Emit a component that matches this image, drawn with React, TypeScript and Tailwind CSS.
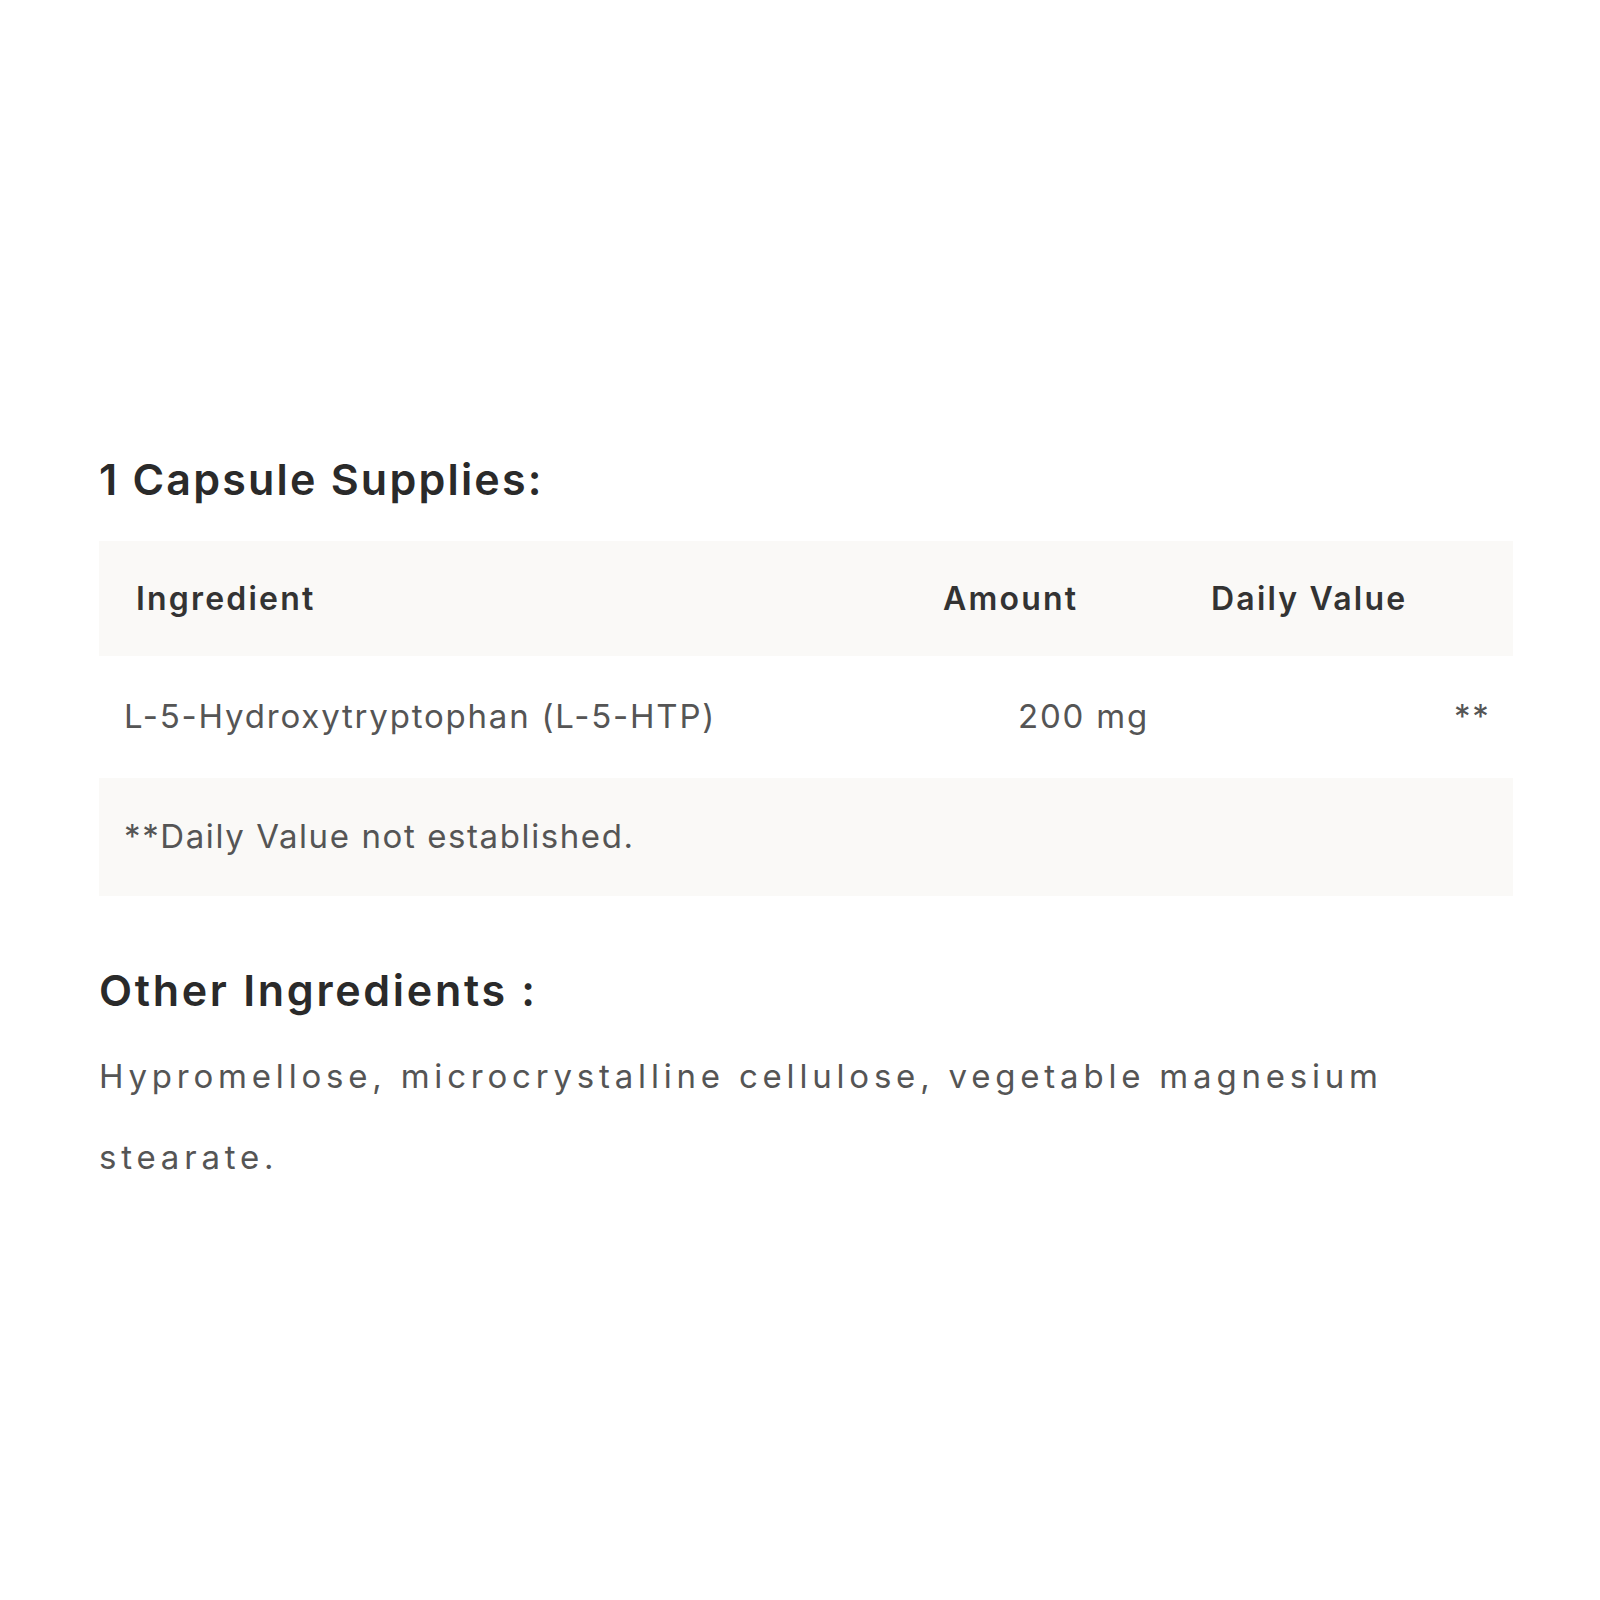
const rows = [
  { name: 'L-5-Hydroxytryptophan (L-5-HTP)', amount: '200 mg', dv: '**' },
]

export default function App() {
  return (
    <div className="w-[1600px] h-[1600px] bg-white font-['Inter',sans-serif]">
      <div className="pt-[451px] pl-[99px] w-[1513px]">
        <h2 className="text-[43px] leading-[56px] font-semibold text-[#2a2a2a] tracking-[2.2px]">
          1 Capsule Supplies:
        </h2>

        <div className="mt-[34px]">
          <div className="flex items-center h-[115px] bg-[#faf9f7] text-[32px] font-semibold text-[#333] tracking-[2.2px]">
            <div className="w-[844px] pl-[37px]">Ingredient</div>
            <div className="w-[268px]">Amount</div>
            <div>Daily Value</div>
          </div>
          {rows.map((r) => (
            <div key={r.name} className="flex items-center h-[122px] text-[33px] text-[#555] tracking-[1.8px]">
              <div className="w-[919px] pl-[25px]">{r.name}</div>
              <div className="w-[436px]">{r.amount}</div>
              <div>{r.dv}</div>
            </div>
          ))}
          <div className="flex items-center h-[118px] bg-[#faf9f7] pl-[25px] text-[33px] text-[#555] tracking-[1.6px]">
            **Daily Value not established.
          </div>
        </div>

        <h3 className="mt-[66px] text-[43px] leading-[56px] font-semibold text-[#2a2a2a] tracking-[2.7px]">
          Other Ingredients :
        </h3>
        <p className="mt-[18px] w-[1340px] text-[33px] leading-[81px] text-[#555] tracking-[4.8px]">
          Hypromellose, microcrystalline cellulose, vegetable magnesium stearate.
        </p>
      </div>
    </div>
  )
}
